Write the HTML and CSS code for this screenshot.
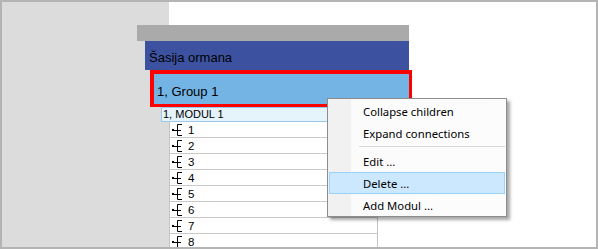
FILE: index.html
```html
<!DOCTYPE html>
<html lang="en">
<head>
  <meta charset="UTF-8" />
  <title>Šasija ormana</title>
  <link rel="stylesheet" href="styles.css">
</head>
<body>
  <div class="frame">
    <div class="tree">
      <div class="tree-bar"></div>
      <div class="node-cabinet">Šasija ormana</div>
      <div class="node-group">1, Group 1</div>
      <div class="node-modul">1, MODUL 1</div>
      <div class="slots" id="slots"></div>
    </div>

    <div class="context-menu">
      <div class="menu-item">Collapse children</div>
      <div class="menu-item">Expand connections</div>
      <div class="menu-sep"></div>
      <div class="menu-item">Edit ...</div>
      <div class="menu-item hover">Delete ...</div>
      <div class="menu-item">Add Modul ...</div>
    </div>
  </div>

  <script>
    const slots = document.getElementById('slots');
    const icon = '<svg class="slot-icon" width="12" height="14" viewBox="0 0 12 14">' +
      '<rect x="0" y="6" width="2" height="2" fill="#000"/>' +
      '<path d="M2 7.5H5.5M5.5 1.5V12.5M5.5 1.5Q6.5 1.5 10 1.5M5.5 7.5H9M5.5 12.5H10" stroke="#000" stroke-width="1" fill="none"/>' +
      '</svg>';
    for (let i = 1; i <= 8; i++) {
      const row = document.createElement('div');
      row.className = 'slot';
      row.innerHTML = icon + '<span>' + i + '</span>';
      slots.appendChild(row);
    }
  </script>
</body>
</html>
```

FILE: styles.css
```css
* {
  box-sizing: border-box;
}

body {
  margin: 0;
  font-family: 'Liberation Sans', Arial, sans-serif;
  background: #fff;
}

.frame {
  position: relative;
  width: 598px;
  height: 249px;
  border: 2px solid #b4b4b4;
  background: linear-gradient(to right, #dcdcdc 167px, #fff 167px);
  overflow: hidden;
}

.tree {
  padding-top: 23px;
  padding-left: 135px;
}

.tree-bar {
  width: 272px;
  height: 16px;
  background-color: #aaaaaa;
}

.node-cabinet {
  margin-left: 8px;
  width: 264px;
  height: 29px;
  padding: 8px 0 0 4px;
  background-color: #3c52a0;
  color: #000;
  font-size: 13px;
  line-height: 17px;
}

.node-group {
  margin-left: 13px;
  width: 262px;
  height: 37px;
  padding: 9px 0 0 3px;
  border: 4px solid #ff0000;
  border-right-width: 3px;
  border-bottom-width: 3px;
  background-color: #74b4e4;
  font-size: 13px;
  line-height: 17px;
}

.node-modul {
  margin-left: 24px;
  width: 216px;
  height: 15px;
  padding-left: 1px;
  border: 1px solid #9cc8ee;
  background-color: #e5f3fb;
  font-size: 11px;
  line-height: 13px;
}

.slots {
  margin-left: 32px;
  width: 209px;
  border-left: 1px solid #c4c4c4;
  border-right: 1px solid #c4c4c4;
  background-color: #fff;
}

.slot {
  display: flex;
  align-items: center;
  gap: 4px;
  height: 16px;
  padding-left: 2px;
  border-bottom: 1px solid #c8c8c8;
  font-size: 11.5px;
}

.slot-icon {
  flex: 0 0 12px;
}

.context-menu {
  position: absolute;
  left: 325px;
  top: 96px;
  width: 180px;
  height: 119px;
  padding-top: 1px;
  border: 1px solid #8c8c8c;
  background: linear-gradient(to right, #f1f1f1 23px, #fbfbfb 23px, #fcfcfc);
  box-shadow: 3px 3px 3px rgba(0, 0, 0, 0.35);
  font-family: 'Noto Sans', 'Open Sans', sans-serif;
  font-size: 11.3px;
}

.menu-item {
  height: 22px;
  padding-left: 34px;
  line-height: 21px;
  color: #000;
  border: 1px solid transparent;
}

.menu-item.hover {
  margin: 0 1px;
  padding-left: 33px;
  background-color: #cce8ff;
  border-color: #99d1ff;
}

.menu-sep {
  height: 6px;
  margin-left: 31px;
  margin-right: 1px;
  background: linear-gradient(#fcfcfc 2px, #d7d7d7 2px, #d7d7d7 3px, #fcfcfc 3px);
}
```
